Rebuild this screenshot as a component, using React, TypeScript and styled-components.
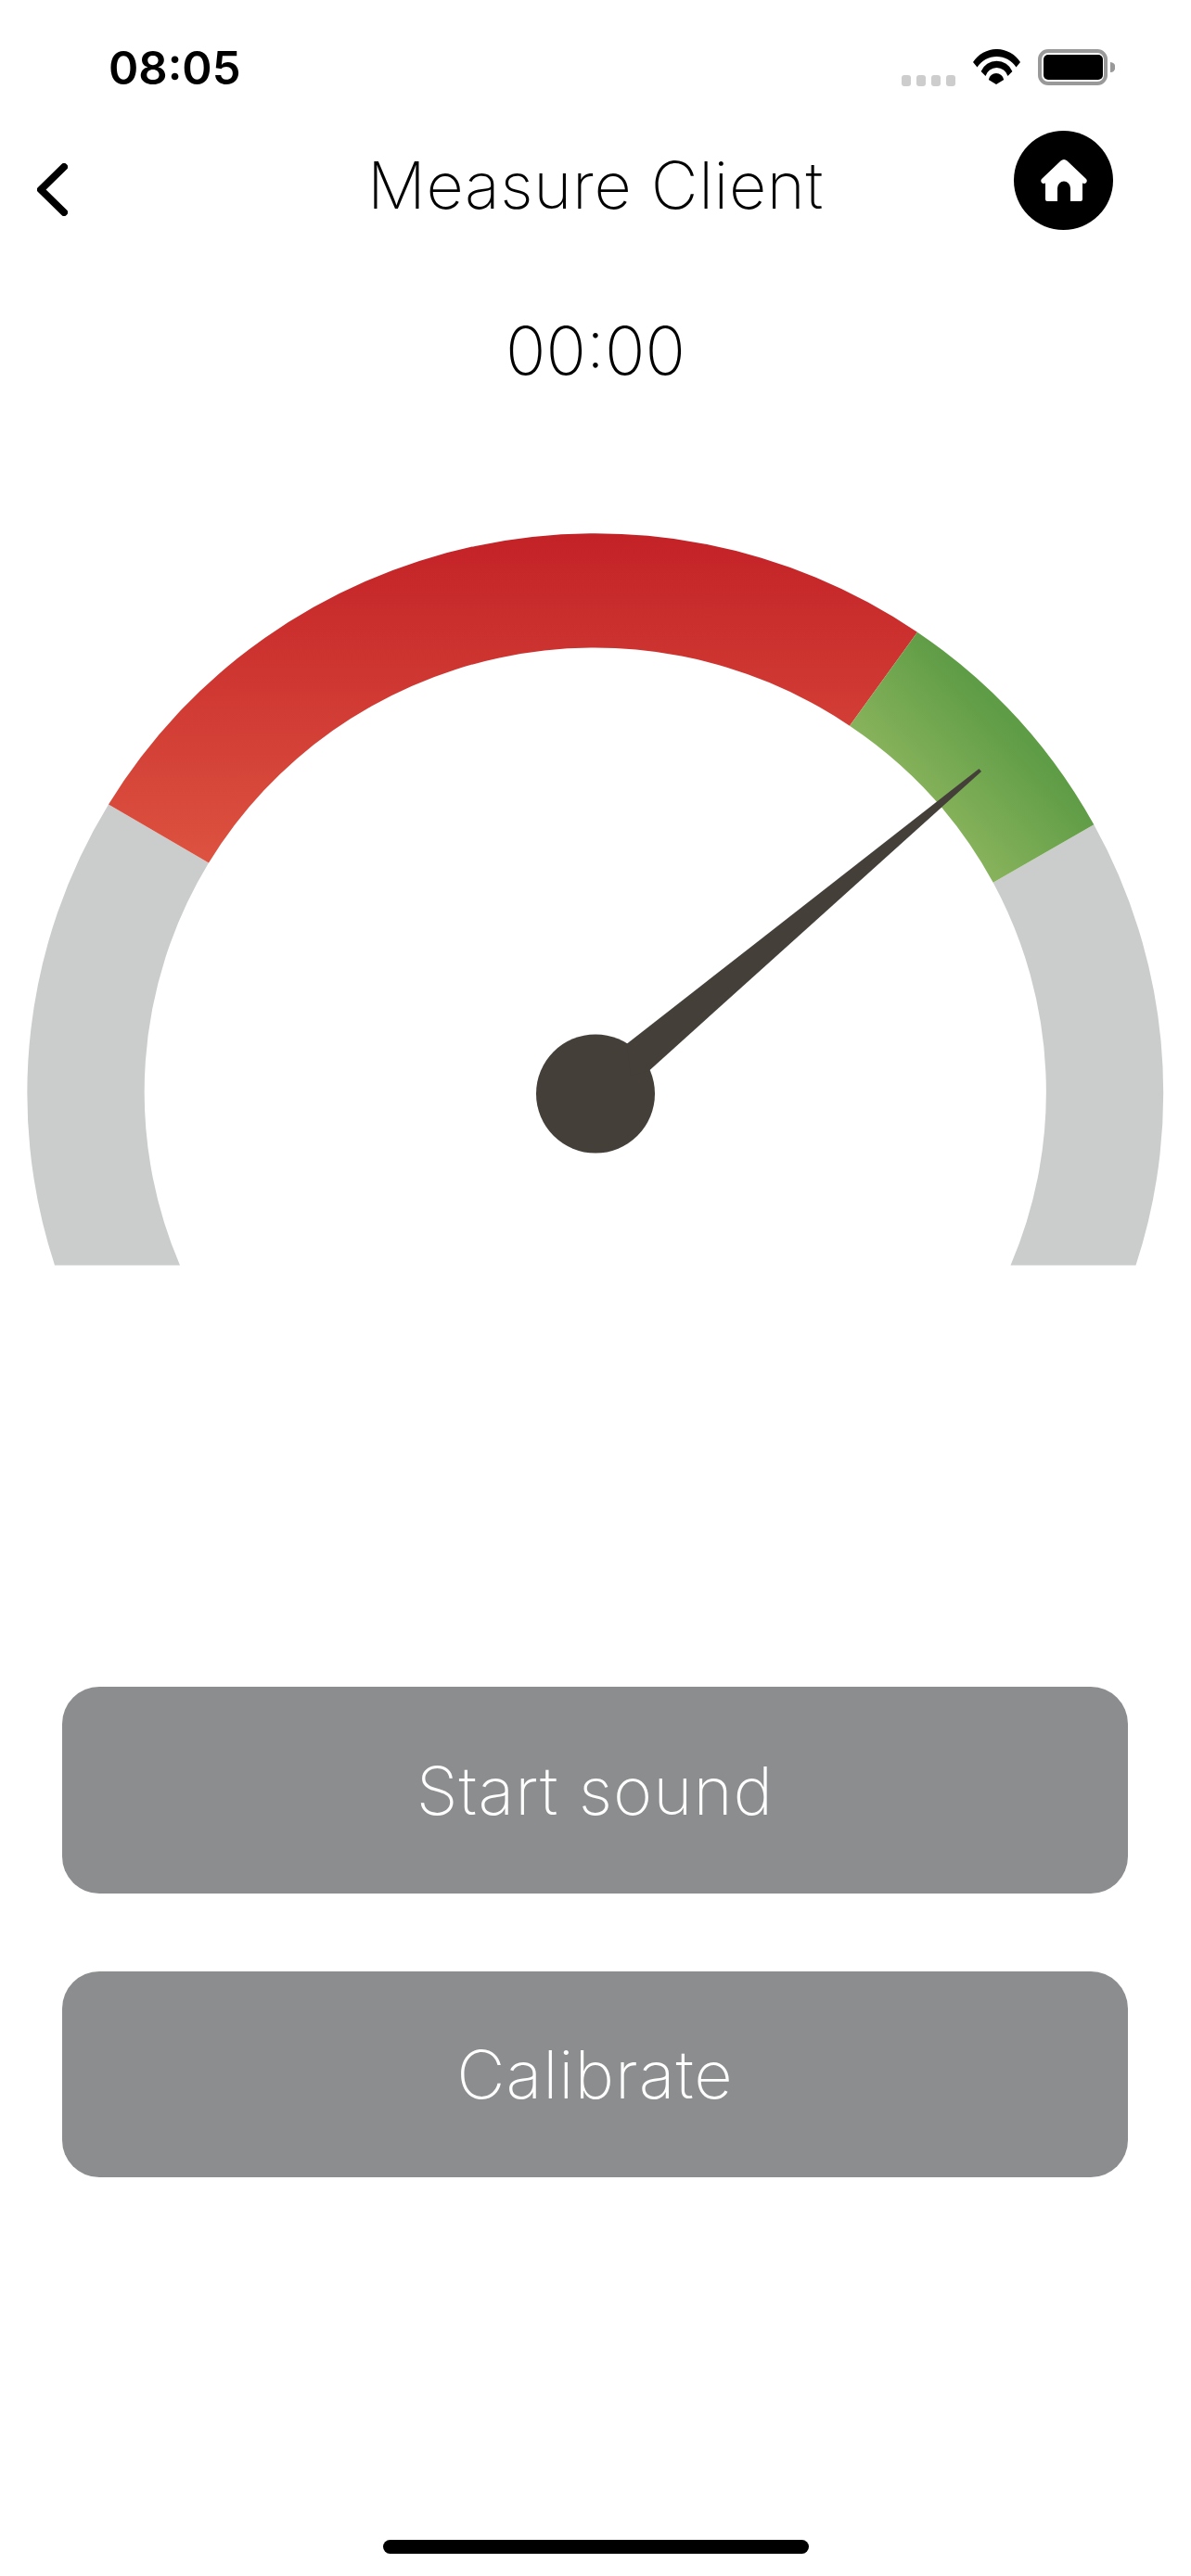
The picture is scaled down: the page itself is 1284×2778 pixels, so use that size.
import { createGlobalStyle } from "styled-components";
import styled from "styled-components";

const GlobalStyle = createGlobalStyle`
  html, body {
    margin: 0;
    padding: 0;
    background: #fff;
  }
  * {
    box-sizing: border-box;
  }
`;

//styles
const Screen = styled.div`
  width: 1284px;
  height: 2778px;
  display: flex;
  flex-direction: column;
  background: #fff;
  font-family: Inter, "Liberation Sans", sans-serif;
  overflow: hidden;
`;

const StatusBar = styled.div`
  height: 141px;
  padding: 44px 82px 0 117px;
  display: flex;
  justify-content: space-between;
  align-items: flex-start;
`;

const Clock = styled.span`
  font-size: 49px;
  line-height: 59px;
  font-weight: 600;
  color: #000;
`;

const StatusIcons = styled.div`
  display: flex;
  align-items: flex-start;
  padding-top: 9px;
`;

const SignalDots = styled.div`
  display: flex;
  gap: 5.5px;
  margin: 28px 19px 0 0;
`;

const SignalDot = styled.i`
  display: block;
  width: 10.5px;
  height: 12px;
  border-radius: 3px;
  background: #cdcdcd;
`;

const BatteryIcon = styled.svg`
  margin-left: 19px;
`;

const NavBar = styled.div`
  height: 107px;
  padding: 0 84px 0 40px;
  display: grid;
  grid-template-columns: 151px 1fr 107px;
  align-items: center;
`;

const BackButton = styled.div`
  display: flex;
  align-items: center;
  padding-top: 19px;
`;

const Title = styled.h1`
  margin: 0;
  padding-top: 10px;
  text-align: center;
  font-size: 70px;
  font-weight: 200;
  color: #000;
  letter-spacing: 0.65px;
  white-space: nowrap;
`;

const HomeButton = styled.div`
  width: 107px;
  height: 107px;
  border-radius: 50%;
  background: #000;
  display: flex;
  align-items: center;
  justify-content: center;
`;

const Timer = styled.div`
  margin-top: 86px;
  text-align: center;
  font-size: 72px;
  line-height: 88px;
  font-weight: 200;
  color: #000;
`;

const Gauge = styled.svg`
  display: block;
  width: 1284px;
  height: 800px;
  margin-top: 148px;
  flex: none;
`;

const Actions = styled.div`
  margin-top: 449px;
  padding: 0 68px 0 67px;
  display: flex;
  flex-direction: column;
  gap: 84px;
`;

const ActionButton = styled.button`
  height: 222.5px;
  border: none;
  border-radius: 40px;
  background: #8c8d8f;
  color: #fff;
  font-family: inherit;
  font-size: 72px;
  font-weight: 200;
  letter-spacing: 1px;
  padding: 0;
`;

const HomeIndicator = styled.div`
  width: 459px;
  height: 15px;
  margin: 391px auto 0;
  border-radius: 8px;
  background: #000;
`;

// gauge geometry, read off the screenshot; the arcs are very slightly elliptical
const OUTER = "612.6 604";
const INNER = "486 480";

function Band({ from, to, fill }: { from: number[][]; to: number[][]; fill: string }) {
  const [o1, i1] = from;
  const [o2, i2] = to;
  const d = `M${o1} A${OUTER} 0 0 1 ${o2} L${i2} A${INNER} 0 0 0 ${i1} Z`;
  return <path d={d} fill={fill} />;
}

export default function App() {
  return (
    <Screen>
      <GlobalStyle />
      <StatusBar>
        <Clock>08:05</Clock>
        <StatusIcons>
          <SignalDots>
            <SignalDot />
            <SignalDot />
            <SignalDot />
            <SignalDot />
          </SignalDots>
          <svg width="51" height="38" viewBox="0 0 51 38">
            <path d="M0 14 A30.2 30.2 0 0 1 51 14 L46.5 19.5 A25 25 0 0 0 4.5 19.5 Z" fill="#000" />
            <path d="M8.6 24 A18.3 18.3 0 0 1 42.4 24 L37.5 29 A12.5 12.5 0 0 0 13.5 29 Z" fill="#000" />
            <path d="M16.8 33 A8.3 8.3 0 0 1 33.2 33 L25 38 Z" fill="#000" />
          </svg>
          <BatteryIcon width="83" height="40" viewBox="0 0 83 40">
            <rect x="2" y="2" width="71" height="35" rx="9" fill="none" stroke="#999" strokeWidth="4" />
            <rect x="6" y="6" width="64" height="27" rx="5" fill="#000" />
            <path d="M78 14 a5.5 5.5 0 0 1 0 11 Z" fill="#999" />
          </BatteryIcon>
        </StatusIcons>
      </StatusBar>

      <NavBar>
        <BackButton>
          <svg width="33" height="57" viewBox="0 0 33 57">
            <path d="M29 4 L4 28.5 L29 53" fill="none" stroke="#000" strokeWidth="8" strokeLinecap="round" strokeLinejoin="round" />
          </svg>
        </BackButton>
        <Title>Measure Client</Title>
        <HomeButton>
          <svg width="50" height="46" viewBox="0 0 50 46">
            <path
              d="M25 0 Q27 0 28.5 1.5 L49 21 Q50.5 23 49 25 Q47.5 26.5 45 25.5 V43 Q45 45 43 45 H32 V31 A7 7.5 0 0 0 18 31 V45 H7 Q5 45 5 43 V25.5 Q2.5 26.5 1 25 Q-0.5 23 1 21 L21.5 1.5 Q23 0 25 0 Z"
              fill="#fff"
            />
          </svg>
        </HomeButton>
      </NavBar>

      <Timer>00:00</Timer>

      <Gauge viewBox="0 570 1284 800">
        <defs>
          <linearGradient id="redBand" gradientUnits="userSpaceOnUse" x1="642" y1="572" x2="642" y2="935">
            <stop offset="0" stopColor="#c32126" />
            <stop offset="1" stopColor="#dd5340" />
          </linearGradient>
          <linearGradient id="greenBand" gradientUnits="userSpaceOnUse" x1="916" y1="783" x2="1012" y2="695">
            <stop offset="0" stopColor="#88b35c" />
            <stop offset="1" stopColor="#5e9c45" />
          </linearGradient>
        </defs>
        <Band from={[[59, 1364.5], [194, 1364.5]]} to={[[117, 867.5], [225, 930.6]]} fill="#cbcccc" />
        <Band from={[[1179.3, 889.3], [1070.7, 951.7]]} to={[[1224.5, 1364.5], [1089.5, 1364.5]]} fill="#cbcccc" />
        <Band from={[[117, 867.5], [225, 930.6]]} to={[[989, 681.7], [916, 782.7]]} fill="url(#redBand)" />
        <Band from={[[989, 681.7], [916, 782.7]]} to={[[1179.3, 889.3], [1070.7, 951.7]]} fill="url(#greenBand)" />
        <circle cx="642" cy="1179.5" r="64" fill="#443f38" />
        <path d="M675.7 1125.8 L1055.5 829 L1058 832 L700 1154.4 L680 1160 Z" fill="#443f38" />
      </Gauge>

      <Actions>
        <ActionButton>Start sound</ActionButton>
        <ActionButton>Calibrate</ActionButton>
      </Actions>

      <HomeIndicator />
    </Screen>
  );
}
